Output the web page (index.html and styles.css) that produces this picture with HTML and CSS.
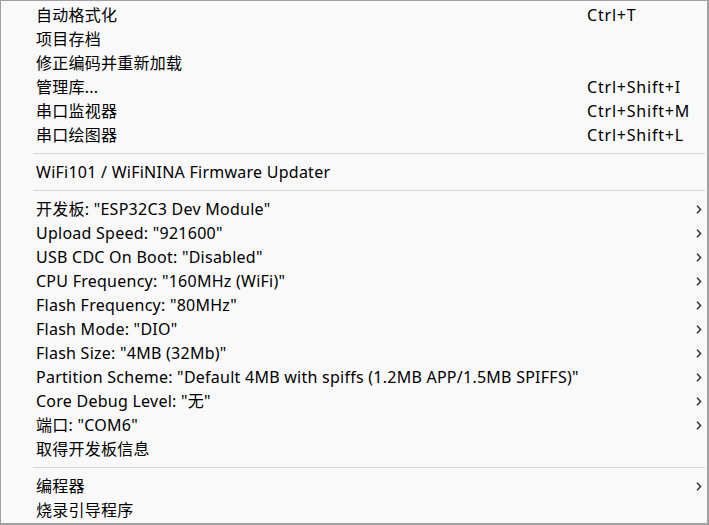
FILE: index.html
```html
<!DOCTYPE html>
<html lang="zh-CN">
<head>
<meta charset="utf-8">
<title>工具菜单</title>
<link rel="stylesheet" href="styles.css">
</head>
<body>
<div class="menu">
  <div class="item"><span class="label">自动格式化</span><span class="key">Ctrl+T</span></div>
  <div class="item"><span class="label">项目存档</span></div>
  <div class="item"><span class="label">修正编码并重新加载</span></div>
  <div class="item"><span class="label">管理库...</span><span class="key">Ctrl+Shift+I</span></div>
  <div class="item"><span class="label">串口监视器</span><span class="key">Ctrl+Shift+M</span></div>
  <div class="item"><span class="label">串口绘图器</span><span class="key">Ctrl+Shift+L</span></div>
  <div class="sep"></div>
  <div class="item"><span class="label">WiFi101 / WiFiNINA Firmware Updater</span></div>
  <div class="sep"></div>
  <div class="item sub"><span class="label">开发板: "ESP32C3 Dev Module"</span><svg class="chev" viewBox="0 0 6 9"><polyline points="1,0.8 4.6,4.5 1,8.2"/></svg></div>
  <div class="item sub"><span class="label">Upload Speed: "921600"</span><svg class="chev" viewBox="0 0 6 9"><polyline points="1,0.8 4.6,4.5 1,8.2"/></svg></div>
  <div class="item sub"><span class="label">USB CDC On Boot: "Disabled"</span><svg class="chev" viewBox="0 0 6 9"><polyline points="1,0.8 4.6,4.5 1,8.2"/></svg></div>
  <div class="item sub"><span class="label">CPU Frequency: "160MHz (WiFi)"</span><svg class="chev" viewBox="0 0 6 9"><polyline points="1,0.8 4.6,4.5 1,8.2"/></svg></div>
  <div class="item sub"><span class="label">Flash Frequency: "80MHz"</span><svg class="chev" viewBox="0 0 6 9"><polyline points="1,0.8 4.6,4.5 1,8.2"/></svg></div>
  <div class="item sub"><span class="label">Flash Mode: "DIO"</span><svg class="chev" viewBox="0 0 6 9"><polyline points="1,0.8 4.6,4.5 1,8.2"/></svg></div>
  <div class="item sub"><span class="label">Flash Size: "4MB (32Mb)"</span><svg class="chev" viewBox="0 0 6 9"><polyline points="1,0.8 4.6,4.5 1,8.2"/></svg></div>
  <div class="item sub"><span class="label">Partition Scheme: "Default 4MB with spiffs (1.2MB APP/1.5MB SPIFFS)"</span><svg class="chev" viewBox="0 0 6 9"><polyline points="1,0.8 4.6,4.5 1,8.2"/></svg></div>
  <div class="item sub"><span class="label">Core Debug Level: "无"</span><svg class="chev" viewBox="0 0 6 9"><polyline points="1,0.8 4.6,4.5 1,8.2"/></svg></div>
  <div class="item sub"><span class="label">端口: "COM6"</span><svg class="chev" viewBox="0 0 6 9"><polyline points="1,0.8 4.6,4.5 1,8.2"/></svg></div>
  <div class="item"><span class="label">取得开发板信息</span></div>
  <div class="sep"></div>
  <div class="item sub"><span class="label">编程器</span><svg class="chev" viewBox="0 0 6 9"><polyline points="1,0.8 4.6,4.5 1,8.2"/></svg></div>
  <div class="item"><span class="label">烧录引导程序</span></div>
</div>
</body>
</html>
```
FILE: styles.css
```css
html, body {
  margin: 0;
  padding: 0;
  background: #f9f9f9;
}

.menu {
  box-sizing: border-box;
  width: 709px;
  height: 525px;
  background: #f9f9f9;
  border-top: 1px solid #a0a0a0;
  border-left: 1px solid #a0a0a0;
  border-right: 2px solid #a0a0a0;
  border-bottom: 2px solid #a0a0a0;
  padding-top: 2px;
  font-family: "Noto Sans", "Noto Sans CJK SC", sans-serif;
  font-size: 16px;
  letter-spacing: 0.25px;
  color: #000;
}

.item {
  height: 24px;
  line-height: 22px;
  display: grid;
  grid-template-columns: 551px 1fr 6px;
  align-items: center;
  padding-left: 35px;
  padding-right: 5px;
  white-space: nowrap;
}

.label {
  grid-column: 1;
}

.key {
  grid-column: 2;
  letter-spacing: 0.8px;
}

.chev {
  grid-column: 3;
  width: 6px;
  height: 9px;
  fill: none;
  stroke: #2a2a2a;
  stroke-width: 1.4;
}

.sep {
  height: 1px;
  margin: 6px 2px 6px 32px;
  background: #d7d7d7;
}
```
